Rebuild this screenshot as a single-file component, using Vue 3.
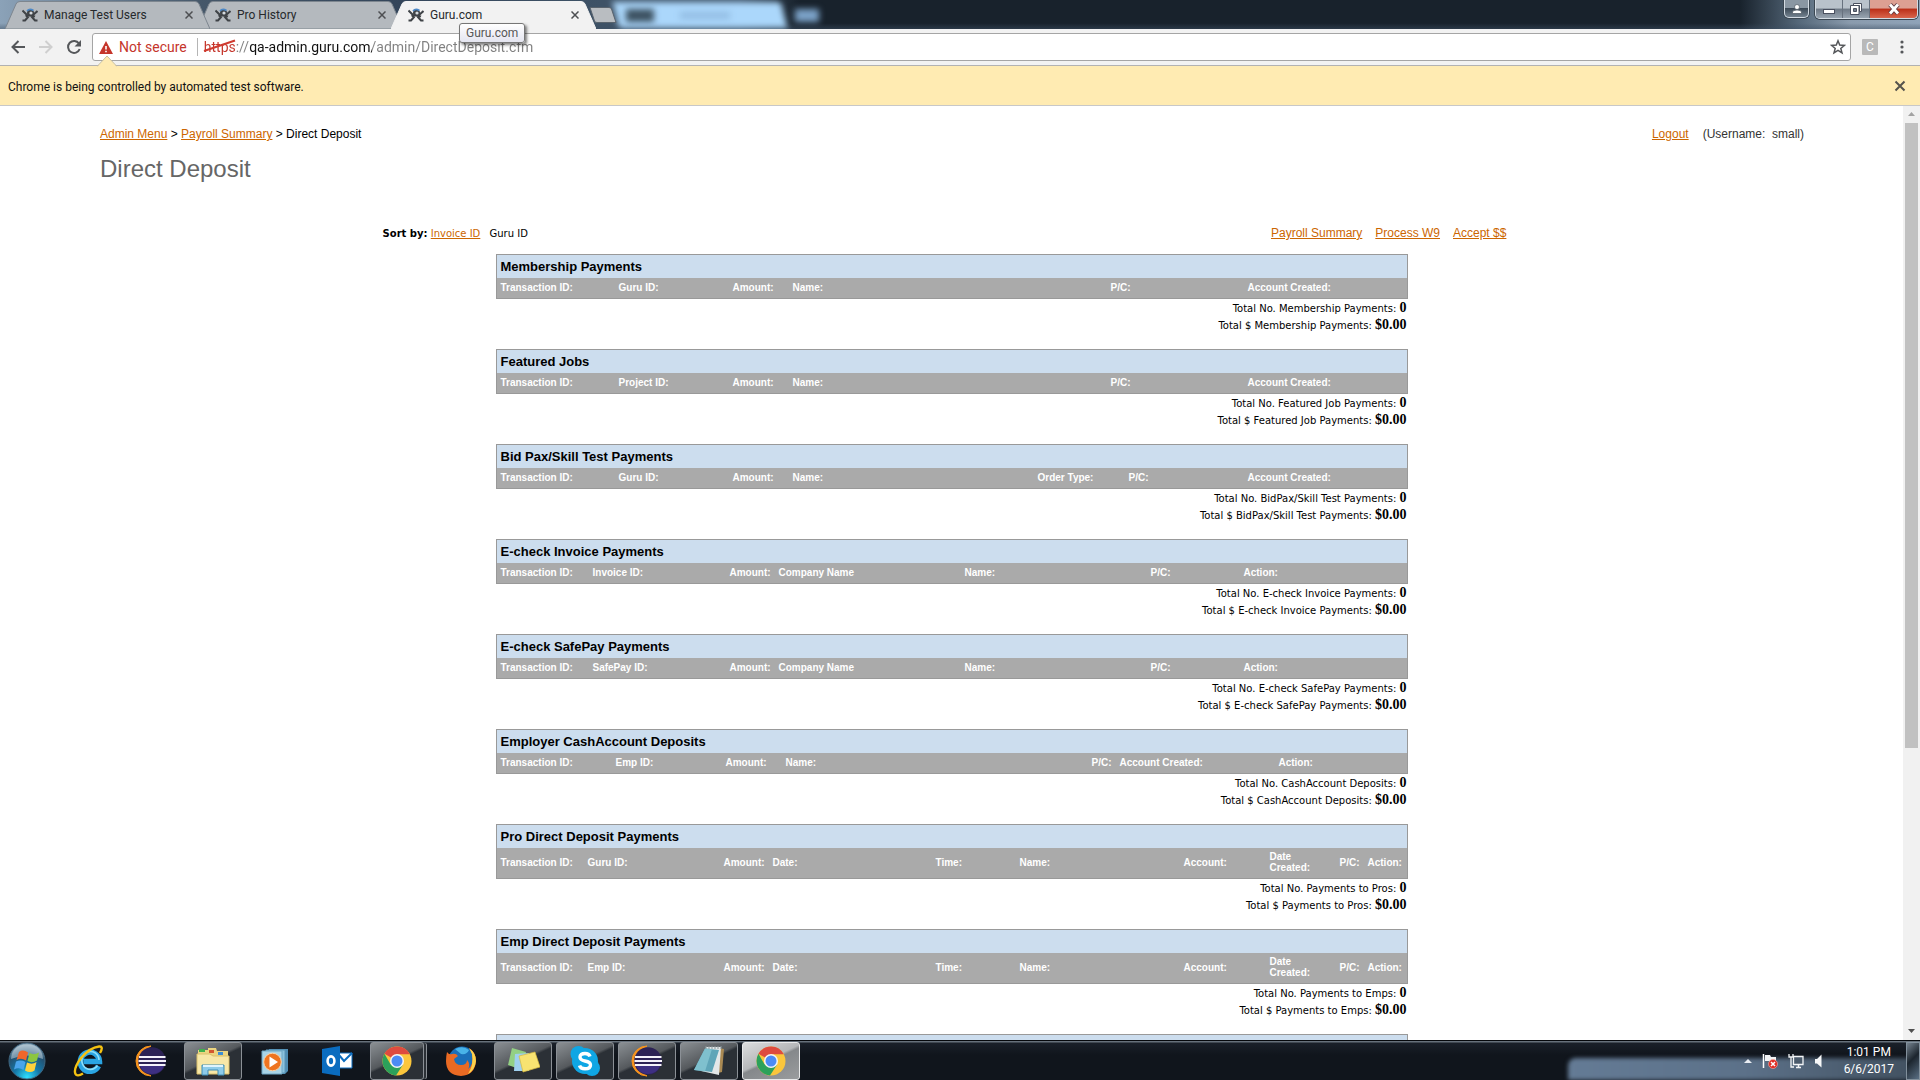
<script setup>
const tabs = [
  { title: 'Manage Test Users', active: false },
  { title: 'Pro History', active: false },
  { title: 'Guru.com', active: true },
]

const INNER = 910

// Each column is [label, start]; starts are measured inside the 910-unit table body.
const std = (second) => [['Transaction ID:', 0], [second, 118], ['Amount:', 232], ['Name:', 292], ['P/C:', 610], ['Account Created:', 747]]
const echeck = (second) => [['Transaction ID:', 0], [second, 92], ['Amount:', 229], ['Company Name', 278], ['Name:', 464], ['P/C:', 650], ['Action:', 743]]
const direct = (second) => [['Transaction ID:', 0], [second, 87], ['Amount:', 223], ['Date:', 272], ['Time:', 435], ['Name:', 519], ['Account:', 683], ['Date Created:', 769], ['P/C:', 839], ['Action:', 867]]

const sections = [
  { title: 'Membership Payments', cols: std('Guru ID:'), total: 'Membership Payments' },
  { title: 'Featured Jobs', cols: std('Project ID:'), total: 'Featured Job Payments' },
  {
    title: 'Bid Pax/Skill Test Payments',
    cols: [['Transaction ID:', 0], ['Guru ID:', 118], ['Amount:', 232], ['Name:', 292], ['Order Type:', 537], ['P/C:', 628], ['Account Created:', 747]],
    total: 'BidPax/Skill Test Payments',
  },
  { title: 'E-check Invoice Payments', cols: echeck('Invoice ID:'), total: 'E-check Invoice Payments' },
  { title: 'E-check SafePay Payments', cols: echeck('SafePay ID:'), total: 'E-check SafePay Payments' },
  {
    title: 'Employer CashAccount Deposits',
    cols: [['Transaction ID:', 0], ['Emp ID:', 115], ['Amount:', 225], ['Name:', 285], ['P/C:', 591], ['Account Created:', 619], ['Action:', 778]],
    total: 'CashAccount Deposits',
  },
  { title: 'Pro Direct Deposit Payments', cols: direct('Guru ID:'), total: 'Payments to Pros', tall: true },
  { title: 'Emp Direct Deposit Payments', cols: direct('Emp ID:'), total: 'Payments to Emps', tall: true },
]

const colWidth = (cols, i) => {
  const end = i + 1 < cols.length ? cols[i + 1][1] : INNER
  return ((end - cols[i][1]) / INNER) * 100 + '%'
}

const apps = [
  { name: 'Internet Explorer', icon: 'ie' },
  { name: 'Eclipse', icon: 'eclipse' },
  { name: 'Windows Explorer', icon: 'explorer', state: 'open' },
  { name: 'Media Player', icon: 'wmp' },
  { name: 'Outlook', icon: 'outlook' },
  { name: 'Chrome', icon: 'chrome', state: 'open stacked' },
  { name: 'Firefox', icon: 'firefox' },
  { name: 'Sticky Notes', icon: 'notes', state: 'open' },
  { name: 'Skype', icon: 'skype', state: 'open' },
  { name: 'Eclipse workspace', icon: 'eclipse', state: 'open' },
  { name: 'Notepad', icon: 'notepad', state: 'open' },
  { name: 'Chrome window', icon: 'chrome', state: 'active' },
]
</script>

<template>
  <div class="desktop">
    <header class="titlebar">
      <div class="glass"><i class="glass-tab"></i><i class="glass-dark"></i><i class="glass-line"></i><i class="glass-new"></i></div>
      <div v-for="tab in tabs" :key="tab.title" class="tab" :class="{ active: tab.active }">
        <svg class="tab-shape" viewBox="0 0 205 28" preserveAspectRatio="none" aria-hidden="true">
          <path d="M0 28 L11 3 Q12 .5 15 .5 H190 Q193 .5 194 3 L205 28 Z" />
        </svg>
        <svg class="favicon" viewBox="0 0 16 16" aria-hidden="true">
          <path d="M.5 3.500 L5 8 M15.500 4 L11 8 M3.500 9 Q8 7.500 13 9.500 M6.500 9.500 L3 13.500 H.5 M9.500 9.500 L13 13.500 H15.500" fill="none" stroke="#3f4347" stroke-width="2" />
          <circle cx="8.500" cy="6" r="3.500" fill="#3f4347" />
          <circle cx="9" cy="6" r="1.600" fill="#d5dade" />
          <path d="M5 4 Q7.500 1 11.500 3.500" fill="none" stroke="#4b87c6" stroke-width="1.600" />
        </svg>
        <span class="tab-title">{{ tab.title }}</span>
        <button class="tab-close" aria-label="Close tab">
          <svg viewBox="0 0 8 8" width="8" height="8"><path d="M.5 .5 L7.500 7.500 M7.500 .5 L.5 7.500" stroke="#4d4f52" stroke-width="1.500" /></svg>
        </button>
      </div>
      <button class="new-tab" aria-label="New tab">
        <svg viewBox="0 0 28 16" width="28" height="16"><path d="M1 .5 H20 Q22 .5 22.500 2 L27 15.500 H8 Q6 15.500 5.500 14 Z" fill="#b9bdc1" stroke="#59636d" /></svg>
      </button>
      <div class="window-controls">
        <button class="wc user" aria-label="Profile">
          <svg viewBox="0 0 12 12" width="12" height="12"><circle cx="6" cy="4" r="2.500" fill="#fff" stroke="#4a545f" stroke-width=".7" /><path d="M1.500 10.500 V9 Q2 7 6 7 Q10 7 10.500 9 V10.500 Z" fill="#fff" stroke="#4a545f" stroke-width=".7" /></svg>
        </button>
        <div class="wc-group">
          <button class="wc min" aria-label="Minimize">
            <svg viewBox="0 0 14 12" width="14" height="12"><rect x="1.500" y="6.500" width="11" height="4" fill="#fff" stroke="#4a505f" /></svg>
          </button>
          <button class="wc max" aria-label="Restore">
            <svg viewBox="0 0 14 14" width="14" height="14"><path d="M4.500 1.500 H12.500 V9.500 H10.500 V3.500 H4.500 Z" fill="#fff" stroke="#4a505f" /><path fill-rule="evenodd" d="M1.500 3.500 H10 V12.500 H1.500 Z M4.500 6.500 V9.500 H7.500 V6.500 Z" fill="#fff" stroke="#4a505f" /></svg>
          </button>
          <button class="wc close" aria-label="Close window">
            <svg viewBox="0 0 14 12" width="14" height="12"><path d="M3 1.500 L11 10.500 M11 1.500 L3 10.500" stroke="#5e3b42" stroke-width="4.600" /><path d="M3 1.500 L11 10.500 M11 1.500 L3 10.500" stroke="#fff" stroke-width="2.800" /></svg>
          </button>
        </div>
      </div>
    </header>

    <nav class="toolbar" aria-label="Browser">
      <button class="nav-btn" aria-label="Back">
        <svg viewBox="0 0 16 16" width="16" height="16"><path d="M15 8 H3 M8.500 2 L2.500 8 L8.500 14" fill="none" stroke="#55575a" stroke-width="2" /></svg>
      </button>
      <button class="nav-btn" aria-label="Forward">
        <svg viewBox="0 0 16 16" width="16" height="16"><path d="M1 8 H13 M7.500 2 L13.500 8 L7.500 14" fill="none" stroke="#cfcfcf" stroke-width="2" /></svg>
      </button>
      <button class="nav-btn" aria-label="Reload">
        <svg viewBox="0 0 16 16" width="16" height="16"><path d="M13 4.500 A6 6 0 1 0 13.700 10" fill="none" stroke="#55575a" stroke-width="2" /><path d="M15 1 V7.500 H8.500 Z" fill="#55575a" /></svg>
      </button>
      <div class="omnibox">
        <svg class="warn" viewBox="0 0 14 13" width="14" height="13"><path d="M7 0 L14 13 H0 Z" fill="#c5352b" /><path d="M6.200 5 H7.800 V8.500 H6.200 Z M6.200 9.700 H7.800 V11.300 H6.200 Z" fill="#fff" /></svg>
        <span class="not-secure">Not secure</span>
        <span class="url-wrap">
          <input class="url" type="text" aria-label="Address" value="https://qa-admin.guru.com/admin/DirectDeposit.cfm" />
          <svg class="strike" viewBox="0 0 34 14" width="34" height="14"><path d="M1 12 L32 1.500" stroke="#cf3b30" stroke-width="2" /></svg>
        </span>
        <button class="star" aria-label="Bookmark">
          <svg viewBox="0 0 16 16" width="16" height="16"><path d="M8 1.800 L9.700 6.100 L14.400 6.400 L10.800 9.400 L12 13.900 L8 11.400 L4 13.900 L5.200 9.400 L1.600 6.400 L6.300 6.100 Z" fill="none" stroke="#55575a" stroke-width="1.500" /></svg>
        </button>
      </div>
      <button class="ext" aria-label="Extension">C</button>
      <button class="menu" aria-label="Menu">
        <svg viewBox="0 0 4 14" width="4" height="14"><circle cx="2" cy="2" r="1.600" fill="#55575a" /><circle cx="2" cy="7" r="1.600" fill="#55575a" /><circle cx="2" cy="12" r="1.600" fill="#55575a" /></svg>
      </button>
      <span class="tooltip" role="tooltip">Guru.com</span>
    </nav>

    <div class="infobar">
      <svg class="notch" viewBox="0 0 20 12" width="20" height="12"><path d="M0 12 L10 1 L20 12 Z" fill="#ffebb2" /><path d="M0 11.500 L10 1 L20 11.500" fill="none" stroke="#c9bf9f" /></svg>
      <span>Chrome is being controlled by automated test software.</span>
      <button class="info-close" aria-label="Dismiss">
        <svg viewBox="0 0 12 12" width="12" height="12"><path d="M1.500 1.500 L10.500 10.500 M10.500 1.500 L1.500 10.500" stroke="#55534c" stroke-width="2" /></svg>
      </button>
    </div>

    <div class="viewport">
      <main class="page">
        <div class="top-row">
          <div class="crumbs"><a href="#">Admin Menu</a> &gt; <a href="#">Payroll Summary</a> &gt; Direct Deposit</div>
          <div class="account"><a href="#">Logout</a><span>(Username:&nbsp; small)</span></div>
        </div>
        <h1>Direct Deposit</h1>
        <div class="sort-row">
          <div class="sort"><b>Sort by:</b> <a href="#">Invoice ID</a> <span>Guru ID</span></div>
          <div class="quick"><a href="#">Payroll Summary</a><a href="#">Process W9</a><a href="#">Accept $$</a></div>
        </div>
        <section v-for="s in sections" :key="s.title" class="report">
          <table :class="{ tall: s.tall }">
            <colgroup>
              <col v-for="(c, i) in s.cols" :key="i" :style="{ width: colWidth(s.cols, i) }" />
            </colgroup>
            <thead>
              <tr class="title"><th :colspan="s.cols.length">{{ s.title }}</th></tr>
              <tr class="heads"><th v-for="c in s.cols" :key="c[0]" scope="col">{{ c[0] }}</th></tr>
            </thead>
          </table>
          <p>Total No. {{ s.total }}: <b>0</b></p>
          <p>Total $ {{ s.total }}: <b>$0.00</b></p>
        </section>
        <div class="report next-report"></div>
      </main>
      <div class="scrollbar" aria-hidden="true">
        <svg viewBox="0 0 17 17" width="17" height="17"><path d="M5 10 L8.500 6 L12 10 Z" fill="#a3a3a3" /></svg>
        <div class="thumb"></div>
        <div class="track-rest"></div>
        <svg viewBox="0 0 17 17" width="17" height="17"><path d="M5 6 L8.500 10 L12 6 Z" fill="#505050" /></svg>
      </div>
    </div>

    <footer class="taskbar">
      <button class="start" aria-label="Start">
        <svg viewBox="0 0 38 38" width="38" height="38">
          <defs>
            <radialGradient id="orb" cx=".5" cy=".95" r=".9"><stop offset="0" stop-color="#2fe0ff" /><stop offset=".4" stop-color="#1578a8" /><stop offset=".75" stop-color="#24506f" /><stop offset="1" stop-color="#8fa9ba" /></radialGradient>
          </defs>
          <circle cx="19" cy="19" r="18" fill="url(#orb)" stroke="#3f6680" />
          <path d="M3 17 Q4 3 19 2.500 Q34 3 35 17 Q19 10 3 17 Z" fill="#cfe0ea" opacity=".5" />
          <path d="M11 10 Q15 7 20 10.500 L18 18.500 Q13.500 15.500 8.500 18 Z" fill="#f0662b" />
          <path d="M21.500 11 Q26 13.500 31 10.500 L29 18.500 Q24 21.500 19.500 19 Z" fill="#8cc63f" />
          <path d="M8 19.500 Q13 17.500 17.500 20 L15.500 28 Q11 25 6 27.500 Z" fill="#4aa5ec" />
          <path d="M19 20.500 Q24 23 28.500 20 L26.500 28.500 Q22 31.500 17 28.500 Z" fill="#ffd23c" />
        </svg>
      </button>
      <button v-for="app in apps" :key="app.name" class="app" :class="app.state" :aria-label="app.name">
        <svg v-if="app.icon === 'ie'" viewBox="0 0 32 32" width="32" height="32">
          <path d="M25.500 21 A9.600 9.600 0 1 1 26.500 16.500 H10.500" fill="none" stroke="#2aa5e3" stroke-width="5.500" />
          <path d="M24.500 20.500 A8.600 9 0 1 1 26 15" fill="none" stroke="#8fe0fa" stroke-width="1.600" />
          <path d="M27 8 Q31 1 26 1.500 Q17 2.500 8 13 Q0 24 2.500 29 Q4 32 10 28.500" fill="none" stroke="#f5c211" stroke-width="2.400" />
        </svg>
        <svg v-else-if="app.icon === 'eclipse'" viewBox="0 0 32 32" width="32" height="32">
          <path d="M16 1 A15 15 0 0 0 16 31 A17 17 0 0 1 16 1 Z" fill="#f7941e" stroke="#f7941e" />
          <circle cx="17" cy="16" r="13.800" fill="#2c2255" />
          <path d="M5 21 A13 13 0 0 0 29 21 Z" fill="#3d2f82" />
          <path d="M4 12 H30.500 M3.500 16 H31 M4 20 H30.500" stroke="#f4f2fa" stroke-width="2" />
        </svg>
        <svg v-else-if="app.icon === 'explorer'" viewBox="0 0 34 32" width="34" height="32">
          <path d="M2 5 H12 V3 H20 L21 6 H32 V27 H2 Z" fill="#ecd581" />
          <path d="M3 4 H9 V7 H3 Z" fill="#41b14c" /><path d="M13 5 H18 V8 H13 Z" fill="#d4572f" /><path d="M22 7 H27 V10 H22 Z" fill="#3c8fd6" />
          <path d="M1 9 H14 L17 11 H33 V29 H1 Z" fill="#f7e7a7" stroke="#dbc16d" />
          <path d="M6 30 V20 H28 V30 H22 V25 H12 V30 Z" fill="#8dcbe9" stroke="#3f8db5" />
          <path d="M7 21 H27" stroke="#dff4fd" stroke-width="2" />
        </svg>
        <svg v-else-if="app.icon === 'wmp'" viewBox="0 0 32 32" width="32" height="32">
          <path d="M10 4 H29 V26 L26 29 H10 Z" fill="#4f8db3" /><path d="M7 5 H26 V28 H7 Z" fill="#8bc2dd" stroke="#5b95b7" /><path d="M3 6 H23 V29 H3 Z" fill="#a9d4e7" stroke="#6ea7c5" />
          <circle cx="13.500" cy="17" r="8.800" fill="#ee7420" stroke="#fbd3a6" /><path d="M10.500 11.500 L19 17 L10.500 22.500 Z" fill="#fff" />
        </svg>
        <svg v-else-if="app.icon === 'outlook'" viewBox="0 0 32 32" width="32" height="32">
          <path d="M18 8 H31 V23 H18 Z" fill="#fff" stroke="#0a6cbf" /><path d="M18 10 L23 16 L31 8" fill="none" stroke="#0a6cbf" stroke-width="2" />
          <path d="M1 4 L19 1 V31 L1 28 Z" fill="#0a6cbf" /><ellipse cx="10" cy="16" rx="3.400" ry="4.600" fill="none" stroke="#fff" stroke-width="2.600" />
        </svg>
        <svg v-else-if="app.icon === 'chrome'" viewBox="0 0 32 32" width="32" height="32">
          <circle cx="16" cy="16" r="14.500" fill="#fbc63c" />
          <path d="M16 16 L3.440 8.750 A14.500 14.500 0 0 1 28.800 9.300 H16 Z" fill="#de4b3f" />
          <path d="M3.440 8.750 A14.500 14.500 0 0 0 15 30.460 L22.100 19.500 L16 16 L9.500 19.300 Z" fill="#2ca15a" />
          <circle cx="16" cy="16" r="7" fill="#f4f4f4" /><circle cx="16" cy="16" r="5.500" fill="#4c8bf5" />
        </svg>
        <svg v-else-if="app.icon === 'firefox'" viewBox="0 0 32 32" width="32" height="32">
          <circle cx="17" cy="15" r="13.500" fill="#1b6fb8" /><path d="M10 4 Q18 0 24 5 Q22 10 16 9 Z" fill="#49b3e8" />
          <path d="M2 7 Q4 10 7 9 Q11 8 13 11 L9 14 Q10 20 16 20 Q22 20 22 15 Q26 19 23 24 Q29 20 27 9 Q26 5 24 3 Q31 7 31 16 Q30 30 16 31 Q1 30 1 16 Q1 11 2 7 Z" fill="#ea6a23" />
          <path d="M24 3 Q31 8 31 16 Q30 25 23 29 Q29 20 27 9 Z" fill="#fbd34b" />
        </svg>
        <svg v-else-if="app.icon === 'notes'" viewBox="0 0 34 32" width="34" height="32">
          <path d="M6 3 L20 7 L16 25 L2 20 Z" fill="#93d084" /><path d="M9 9 L23 8 L23 26 L8 26 Z" fill="#9fd0ef" /><path d="M13 11 L29 7 L34 22 L17 27 Z" fill="#f8e371" stroke="#d5b93f" stroke-width=".7" />
        </svg>
        <svg v-else-if="app.icon === 'skype'" viewBox="0 0 32 32" width="32" height="32">
          <circle cx="16" cy="16" r="13" fill="#0fa6e4" /><circle cx="9.500" cy="9" r="8" fill="#0fa6e4" /><circle cx="23" cy="23" r="8" fill="#0fa6e4" />
          <path d="M21 11.500 Q20 8.500 16 8.500 Q11 8.500 11 12 Q11 15 16 16 Q21.500 17 21.500 20 Q21.500 23.800 16 23.800 Q11.500 23.800 10.500 20.500" fill="none" stroke="#fff" stroke-width="3.400" />
        </svg>
        <svg v-else viewBox="0 0 32 32" width="32" height="32">
          <path d="M26 3 L31 4 L29 27 L25 28 Z" fill="#a98953" /><path d="M13 2 H28 L26 30 L8 26 Z" fill="#e3e7e8" /><path d="M12 3.500 L26 5 L19 27 L1 25 Z" fill="#5fa5b8" /><path d="M12 3.500 L19 4 L12 26.500 L1 25 Z" fill="#7fc0ce" />
          <path d="M13 1 V4 M16 1 V4 M19 1 V4 M22 1 V4 M25 1 V4 M28 1 V4" stroke="#8b979b" />
        </svg>
      </button>
      <div class="tray-glass"></div>
      <div class="tray">
        <svg viewBox="0 0 8 6" width="8" height="6"><path d="M0 5 L4 1 L8 5 Z" fill="#e8ecf2" /></svg>
        <svg viewBox="0 0 16 16" width="16" height="16"><path d="M1.500 1 V15" stroke="#fff" stroke-width="1.500" /><path d="M3 2 H8 L9 4 H14 V9 H8 L7 8 H3 Z" fill="#f2f4f6" /><circle cx="11" cy="11" r="4.500" fill="#df2c22" stroke="#f7b3ad" stroke-width=".6" /><path d="M9 9 L13 13 M13 9 L9 13" stroke="#fff" stroke-width="1.500" /></svg>
        <svg viewBox="0 0 16 16" width="16" height="16"><path d="M5.500 3.500 H15 V11.500 H5.500 Z" fill="#4a5a6b" stroke="#f2f4f6" stroke-width="1.300" /><path d="M8 14.500 H13 M10.500 12 V14" stroke="#f2f4f6" stroke-width="1.500" /><path d="M1 1 V4 H5 V1 M3 4 V14 H6" fill="none" stroke="#f2f4f6" stroke-width="1.300" /></svg>
        <svg viewBox="0 0 10 16" width="10" height="16"><path d="M1 6 H3 L7.500 1.500 V14.500 L3 10.500 H1 Z" fill="#f6f7f8" /></svg>
        <div class="clock"><span>1:01 PM</span><span>6/6/2017</span></div>
        <button class="show-desktop" aria-label="Show desktop"></button>
      </div>
    </footer>
  </div>
</template>

<style>
body {
  margin: 0;
  background: #fff;
}
</style>

<style scoped>
.desktop {
  display: flex;
  flex-direction: column;
  height: 100vh;
  overflow: hidden;
  font-family: Roboto, "Open Sans", sans-serif;
}
button {
  padding: 0;
  border: 0;
  background: none;
  display: flex;
  align-items: center;
  justify-content: center;
  font-family: inherit;
}
svg {
  display: block;
  flex: none;
}

/* window frame */
.titlebar {
  position: relative;
  display: flex;
  align-items: flex-end;
  height: 29px;
  flex: none;
  padding-left: 5px;
  box-sizing: border-box;
  background:
    linear-gradient(to bottom, transparent 80%, rgba(62, 80, 100, 0.5)),
    linear-gradient(to right, #8ba2b8 0, #46586a 200px, #33455a 400px, #3e5266 600px, #3e5266 740px, #18222c 800px, #18222c 1740px, #56697b 1800px, #8a9bad 1850px, #8fa3b8);
}
.glass {
  position: absolute;
  inset: 0;
  overflow: hidden;
}
.glass-tab,
.glass-dark,
.glass-line,
.glass-new {
  position: absolute;
  filter: blur(3px);
}
.glass-tab {
  left: 616px;
  top: 2px;
  width: 168px;
  height: 26px;
  background: #abd7fb;
  transform: skewX(14deg);
}
.glass-dark {
  left: 626px;
  top: 9px;
  width: 28px;
  height: 13px;
  background: #3d5262;
}
.glass-line {
  left: 680px;
  top: 12px;
  width: 50px;
  height: 7px;
  background: #93bde3;
}
.glass-new {
  left: 795px;
  top: 9px;
  width: 24px;
  height: 13px;
  background: #7ba2c8;
}
.tab {
  position: relative;
  display: flex;
  align-items: center;
  width: 205px;
  height: 28px;
  margin-right: -12px;
  padding: 0 17px;
  box-sizing: border-box;
  z-index: 2;
  font-size: 12px;
  color: #26292c;
}
.tab + .tab {
  z-index: 1;
}
.tab.active {
  z-index: 3;
}
.tab-shape {
  position: absolute;
  inset: 0;
  width: 100%;
  height: 100%;
  z-index: -1;
}
.tab-shape path {
  fill: #b4b9be;
  stroke: #7d868f;
}
.active .tab-shape path {
  fill: #f2f2f2;
  stroke: #f2f2f2;
}
.favicon {
  width: 16px;
  height: 16px;
}
.tab-title {
  flex: 1;
  margin-left: 6px;
  white-space: nowrap;
}
.new-tab {
  position: relative;
  height: 16px;
  margin: 0 0 6px 5px;
}
.window-controls {
  position: relative;
  display: flex;
  align-self: flex-start;
  gap: 6px;
  margin: 0 2px 0 auto;
}
.wc {
  height: 18px;
  box-sizing: border-box;
}
.user,
.wc-group {
  border: 1px solid #d3dbe3;
  border-top: 0;
  border-radius: 0 0 5px 5px;
  box-shadow: 0 0 0 1px #3b4752;
  overflow: hidden;
}
.wc-group {
  display: flex;
}
.user {
  width: 25px;
  background: linear-gradient(#8a97a3 45%, #3d4a57 50%, #73828f);
}
.min,
.max {
  width: 27px;
  border-right: 1px solid #68727f;
  background: linear-gradient(#b9c2cb 45%, #6d7885 50%, #98a4b0);
}
.close {
  width: 47px;
  background: linear-gradient(#dda093 45%, #bb2f18 50%, #d9654c);
}

/* toolbar */
.toolbar {
  position: relative;
  display: flex;
  align-items: center;
  height: 37px;
  flex: none;
  box-sizing: border-box;
  padding: 0 16px 0 10px;
  background: #f2f2f2;
  border-bottom: 1px solid #b2b2b2;
  z-index: 4;
}
.nav-btn {
  width: 16px;
  margin-right: 12px;
}
.omnibox {
  display: flex;
  flex: 1;
  align-items: center;
  height: 28px;
  box-sizing: border-box;
  margin-right: 11px;
  margin-left: -2px;
  padding: 0 4px 0 6px;
  background: #fff;
  border: 1px solid #a5a5a5;
  border-radius: 3px;
}
.not-secure {
  margin-left: 6px;
  padding-right: 10px;
  border-right: 1px solid #b5b5b5;
  font-size: 14px;
  line-height: 18px;
  color: #c5352b;
  white-space: nowrap;
}
.url-wrap {
  position: relative;
  display: flex;
  flex: 1;
  margin-left: 6px;
}
.url {
  width: 100%;
  height: 20px;
  padding: 0;
  border: 0;
  outline: 0;
  font-family: Roboto, sans-serif;
  font-size: 14px;
  color: transparent;
  background: linear-gradient(to right, #c5352b 32px, #808080 32px, #808080 45px, #111 45px, #111 168px, #808080 168px);
  background-clip: text;
  -webkit-background-clip: text;
}
.strike {
  position: absolute;
  left: -1px;
  top: 2px;
}
.ext {
  width: 16px;
  height: 16px;
  margin-right: 22px;
  border-radius: 1px;
  background: #b9b9b9;
  color: #fff;
  font-size: 12px;
}
.tooltip {
  position: absolute;
  left: 459px;
  top: -6px;
  padding: 0 6px;
  border: 1px solid #767676;
  border-radius: 3px;
  background: linear-gradient(#fff, #e4e5f0);
  box-shadow: 2px 2px 3px rgba(0, 0, 0, 0.5);
  color: #575757;
  font-size: 12px;
  line-height: 18px;
}
.infobar {
  position: relative;
  display: flex;
  align-items: center;
  justify-content: space-between;
  height: 40px;
  flex: none;
  box-sizing: border-box;
  padding: 2px 14px 0 8px;
  background: #ffebb2;
  border-bottom: 1px solid #c8c8c8;
  font-size: 12px;
  color: #111;
  z-index: 5;
}
.info-close {
  height: 12px;
  margin-bottom: 2px;
}
.notch {
  position: absolute;
  left: 97px;
  top: -11px;
}

/* page */
.viewport {
  display: flex;
  flex: 1;
  min-height: 0;
  background: #fff;
}
.page {
  flex: 1;
  overflow: hidden;
  padding-top: 20px;
  font-family: "Liberation Sans", Arial, sans-serif;
  font-size: 12px;
  line-height: 16px;
  color: #000;
}
.page a {
  color: #c60;
}
.top-row {
  display: flex;
  justify-content: space-between;
  margin: 0 99px 0 100px;
}
.account {
  display: flex;
  gap: 14px;
  color: #333;
}
h1 {
  margin: 11px 100px 40px;
  font-size: 24px;
  line-height: 32px;
  font-weight: 400;
  color: #666;
}
.sort-row {
  display: flex;
  justify-content: space-between;
  width: 60%;
  box-sizing: border-box;
  margin: 0 auto 13px;
  padding: 0 16px 0 2px;
}
.sort {
  font-family: "DejaVu Sans", Verdana, sans-serif;
  font-size: 10px;
  line-height: 18px;
  height: 16px;
}
.sort span {
  margin-left: 6px;
}
.quick {
  display: flex;
  gap: 13px;
}
.report {
  max-width: 912px;
  margin: 0 auto 16px;
}
.next-report {
  height: 23px;
  box-sizing: border-box;
  border: 1px solid #999;
  background: #cde;
}
table {
  width: 100%;
  table-layout: fixed;
  border: 1px solid #999;
  border-collapse: separate;
  border-spacing: 0;
}
th {
  padding: 0 0 0 4px;
  text-align: left;
}
.title th {
  height: 23px;
  background: #cde;
  font-size: 13px;
}
.heads th {
  height: 18px;
  padding-bottom: 2px;
  background: #aaa;
  color: #fff;
  font-size: 10px;
  line-height: 11px;
}
.tall .heads th {
  height: 28px;
}
.tall .heads th:nth-child(8) {
  padding-right: 20px;
}
.report p {
  margin: 0;
  padding-right: 1px;
  text-align: right;
  font-family: "DejaVu Sans", Verdana, sans-serif;
  font-size: 10px;
  line-height: 17px;
  height: 17px;
}
.report b {
  font-family: "Liberation Serif", "Times New Roman", serif;
  font-size: 14px;
}
.scrollbar {
  display: flex;
  flex-direction: column;
  width: 17px;
  background: #f1f1f1;
}
.thumb {
  flex: 25;
  margin: 0 2px;
  background: #c1c1c1;
}
.track-rest {
  flex: 11;
}

/* taskbar */
.taskbar {
  position: relative;
  display: flex;
  align-items: center;
  height: 40px;
  flex: none;
  box-sizing: border-box;
  padding-left: 8px;
  gap: 4px;
  border-top: 1px solid #05080c;
  background: linear-gradient(#66707a 0, #66707a 1px, #1a2029 2px, #10151c 14px, #10151c);
}
.start {
  width: 38px;
  margin-right: 10px;
}
.app {
  width: 58px;
  height: 38px;
  box-sizing: border-box;
  border: 1px solid transparent;
}
.app.open {
  border-color: #8b9096;
  border-radius: 3px;
  background: linear-gradient(155deg, #8a8f93 0, #55595d 45%, #2b3036 50%, #2b3036);
}
.app.stacked {
  width: 54px;
  margin-right: 4px;
  box-shadow: 3px 0 0 -1px #2b3036, 4px 0 0 -1px #8b9096;
}
.app.active {
  border-color: #e8e9ea;
  border-radius: 3px;
  background: linear-gradient(155deg, #dcddde 0, #b5b7b9 45%, #85888b 50%, #9a9c9e);
}
.tray-glass {
  position: absolute;
  right: 0;
  bottom: 0;
  width: 352px;
  height: 22px;
  border-radius: 8px 0 0 0;
  background: linear-gradient(to right, #647b95, #5c7189 50%, #41505f);
  filter: blur(2px);
}
.tray {
  position: relative;
  display: flex;
  align-items: center;
  gap: 10px;
  height: 100%;
  margin-left: auto;
}
.clock {
  display: flex;
  flex-direction: column;
  align-items: center;
  margin-left: 10px;
  margin-right: 2px;
  color: #fff;
  font-size: 12px;
  line-height: 17px;
}
.show-desktop {
  width: 14px;
  height: 38px;
  border: 1px solid #82909c;
  background: linear-gradient(135deg, #75828e, #1c252e 45%, #5a6f84);
}
</style>
